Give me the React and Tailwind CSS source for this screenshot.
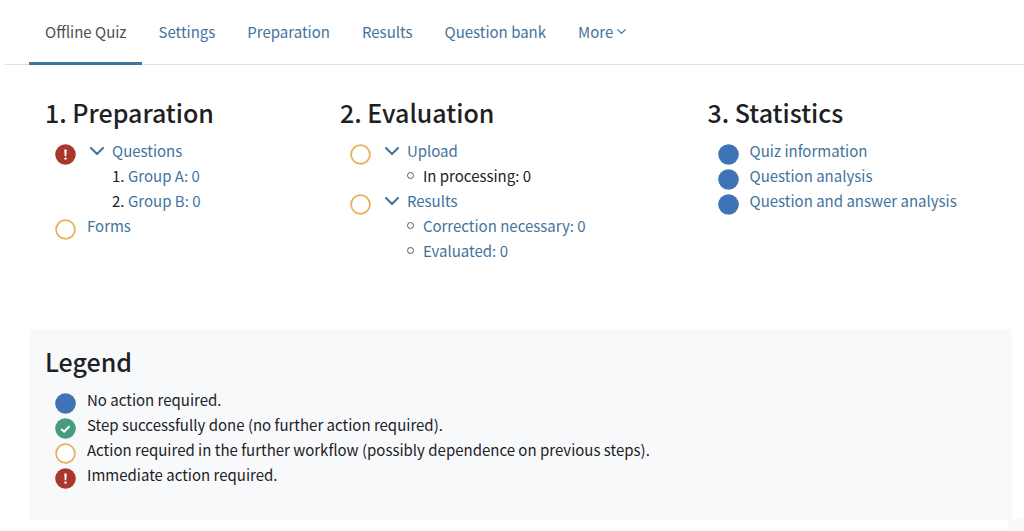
import React, { useState } from "react";

const tabs = ["Offline Quiz", "Settings", "Preparation", "Results", "Question bank"];

const columns = [
  {
    title: "1. Preparation",
    width: "w-[30%]",
    steps: [
      {
        status: "alert",
        label: "Questions",
        ordered: true,
        children: [
          { label: "Group A: 0", link: true },
          { label: "Group B: 0", link: true },
        ],
      },
      { status: "open", label: "Forms" },
    ],
  },
  {
    title: "2. Evaluation",
    width: "w-[37.4%]",
    steps: [
      {
        status: "open",
        label: "Upload",
        children: [{ label: "In processing: 0", link: false }],
      },
      {
        status: "open",
        label: "Results",
        children: [
          { label: "Correction necessary: 0", link: true },
          { label: "Evaluated: 0", link: true },
        ],
      },
    ],
  },
  {
    title: "3. Statistics",
    width: "flex-1",
    steps: [
      { status: "none", label: "Quiz information" },
      { status: "none", label: "Question analysis" },
      { status: "none", label: "Question and answer analysis" },
    ],
  },
];

const legend = [
  { status: "none", label: "No action required." },
  { status: "done", label: "Step successfully done (no further action required)." },
  {
    status: "open",
    label: "Action required in the further workflow (possibly dependence on previous steps).",
  },
  { status: "alert", label: "Immediate action required." },
];

const StatusIcon = ({ status }) => (
  <svg viewBox="0 0 21 21" className="-mb-1 mt-[6px] h-[21px] w-[21px] shrink-0" aria-hidden="true">
    {status === "none" && <circle cx="10.5" cy="10.5" r="10.3" fill="#3f73b5" />}
    {status === "open" && (
      <circle cx="10.5" cy="10.5" r="9.4" fill="#fff" stroke="#e9b05a" strokeWidth="1.8" />
    )}
    {status === "done" && (
      <>
        <circle cx="10.5" cy="10.5" r="10.3" fill="#489b80" />
        <path d="M6.1 10.9l3 2.8 5.4-5.4" fill="none" stroke="#fff" strokeWidth="2" />
      </>
    )}
    {status === "alert" && (
      <>
        <circle cx="10.5" cy="10.5" r="10.3" fill="#a9382c" />
        <path d="M9.3 5.6h2.4l-.4 6.6H9.7z" fill="#fff" />
        <circle cx="10.5" cy="14.6" r="1.2" fill="#fff" />
      </>
    )}
  </svg>
);

const Chevron = ({ className }) => (
  <svg viewBox="0 0 14 8" className={className} fill="none" stroke="currentColor" aria-hidden="true">
    <path d="M1 1l6 6 6-6" strokeWidth="2" strokeLinecap="round" strokeLinejoin="round" />
  </svg>
);

const Step = ({ step }) => {
  const [open, setOpen] = useState(true);
  const List = step.ordered ? "ol" : "ul";

  return (
    <li className="flex items-start gap-[11px]">
      <StatusIcon status={step.status} />
      <div>
        <div className="flex items-center">
          {step.children && (
            <button
              type="button"
              aria-label={`Toggle ${step.label}`}
              aria-expanded={open}
              onClick={() => setOpen(!open)}
              className="flex h-[25px] w-[25px] items-center pl-[3px] text-[#3f749d]"
            >
              <Chevron className={open ? "h-2 w-[14px]" : "h-2 w-[14px] -rotate-90"} />
            </button>
          )}
          <a href="#" className="text-[#3f749d] hover:underline">
            {step.label}
          </a>
        </div>
        {step.children && open && (
          <List>
            {step.children.map((child, index) => (
              <li key={child.label} className="flex items-center">
                {step.ordered ? (
                  <span className="w-[41px] pl-[25px]">{index + 1}.</span>
                ) : (
                  <span className="w-[41px] pl-[25px]">
                    <span className="block h-[7px] w-[7px] rounded-full border border-[#55595d]" />
                  </span>
                )}
                {child.link ? (
                  <a href="#" className="text-[#3f749d] hover:underline">
                    {child.label}
                  </a>
                ) : (
                  <span>{child.label}</span>
                )}
              </li>
            ))}
          </List>
        )}
      </div>
    </li>
  );
};

const App = () => {
  return (
    <div className="bg-white font-['Noto_Sans_CJK_SC',sans-serif] text-[15px] leading-[25px] text-[#1d2125]">
      <nav className="ml-[5px] flex h-[65px] border-b border-[#dee2e6] pl-6">
        {tabs.map((tab, index) => (
          <a
            key={tab}
            href="#"
            className={
              index === 0
                ? "-mb-px flex items-center border-b-3 border-[#3f749d] px-4 text-[#495057]"
                : "-mb-px flex items-center border-b-3 border-transparent px-4 text-[#3f749d]"
            }
          >
            {tab}
          </a>
        ))}
        <button
          type="button"
          className="-mb-px flex items-center gap-1 border-b-3 border-transparent px-4 text-[#3f749d]"
        >
          More
          <Chevron className="h-[5px] w-[9px]" />
        </button>
      </nav>

      <main className="ml-[29px] mr-3 pt-[31px]">
        <div className="flex min-h-[233px]">
          {columns.map((column) => (
            <section key={column.title} className={`${column.width} pl-4`}>
              <h2 className="mb-[10px] text-[25px] font-medium leading-8">{column.title}</h2>
              <ul className="pl-[10px]">
                {column.steps.map((step) => (
                  <Step key={step.label} step={step} />
                ))}
              </ul>
            </section>
          ))}
        </div>

        <section className="bg-[#f8f9fb] px-4 pb-[33px] pt-4">
          <h2 className="mb-[10px] text-[25px] font-medium leading-8">Legend</h2>
          <ul className="pl-[10px]">
            {legend.map((entry) => (
              <li key={entry.label} className="flex items-start gap-[11px]">
                <StatusIcon status={entry.status} />
                <span>{entry.label}</span>
              </li>
            ))}
          </ul>
        </section>
      </main>

      {/* edge of the footer drawer */}
      <div className="fixed bottom-0 right-0 h-3 w-4 bg-[#f8f9fb]" />
    </div>
  );
};

export default App;
